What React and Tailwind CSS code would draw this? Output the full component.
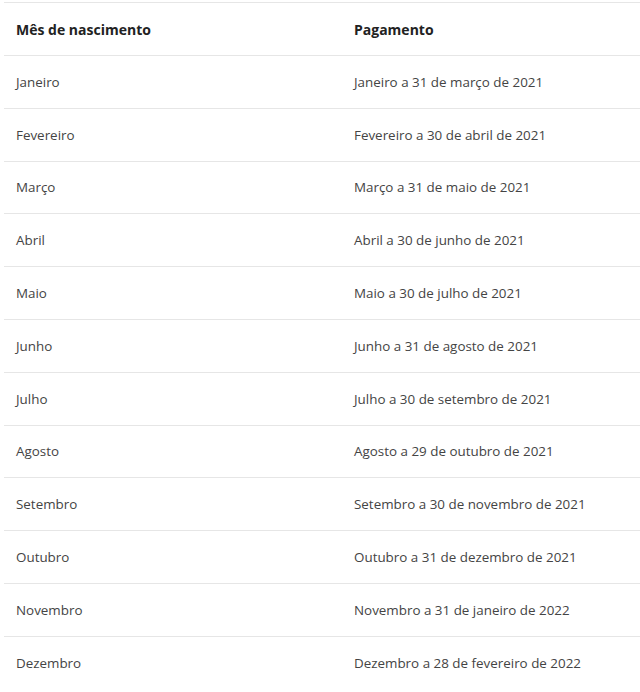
import React from 'react';

const rows = [
    ['Janeiro', 'Janeiro a 31 de março de 2021'],
    ['Fevereiro', 'Fevereiro a 30 de abril de 2021'],
    ['Março', 'Março a 31 de maio de 2021'],
    ['Abril', 'Abril a 30 de junho de 2021'],
    ['Maio', 'Maio a 30 de julho de 2021'],
    ['Junho', 'Junho a 31 de agosto de 2021'],
    ['Julho', 'Julho a 30 de setembro de 2021'],
    ['Agosto', 'Agosto a 29 de outubro de 2021'],
    ['Setembro', 'Setembro a 30 de novembro de 2021'],
    ['Outubro', 'Outubro a 31 de dezembro de 2021'],
    ['Novembro', 'Novembro a 31 de janeiro de 2022'],
    ['Dezembro', 'Dezembro a 28 de fevereiro de 2022'],
];

function App() {
    return (
        <div className="bg-white min-h-screen pt-[2px] pl-[4px] font-['Open_Sans',sans-serif]">
            <div className="grid grid-cols-[338px_1fr] h-[53px] items-center border-t border-[#e6e6e6] font-bold text-[14px] text-[#222]">
                <div className="px-3">Mês de nascimento</div>
                <div className="px-3">Pagamento</div>
            </div>
            {rows.map(([month, pay]) => (
                <div
                    key={month}
                    className="grid grid-cols-[338px_1fr] h-[52.8px] items-center border-t border-[#e6e6e6] text-[13.4px] text-[#444]"
                >
                    <div className="px-3">{month}</div>
                    <div className="px-3">{pay}</div>
                </div>
            ))}
        </div>
    );
}

export default App;
